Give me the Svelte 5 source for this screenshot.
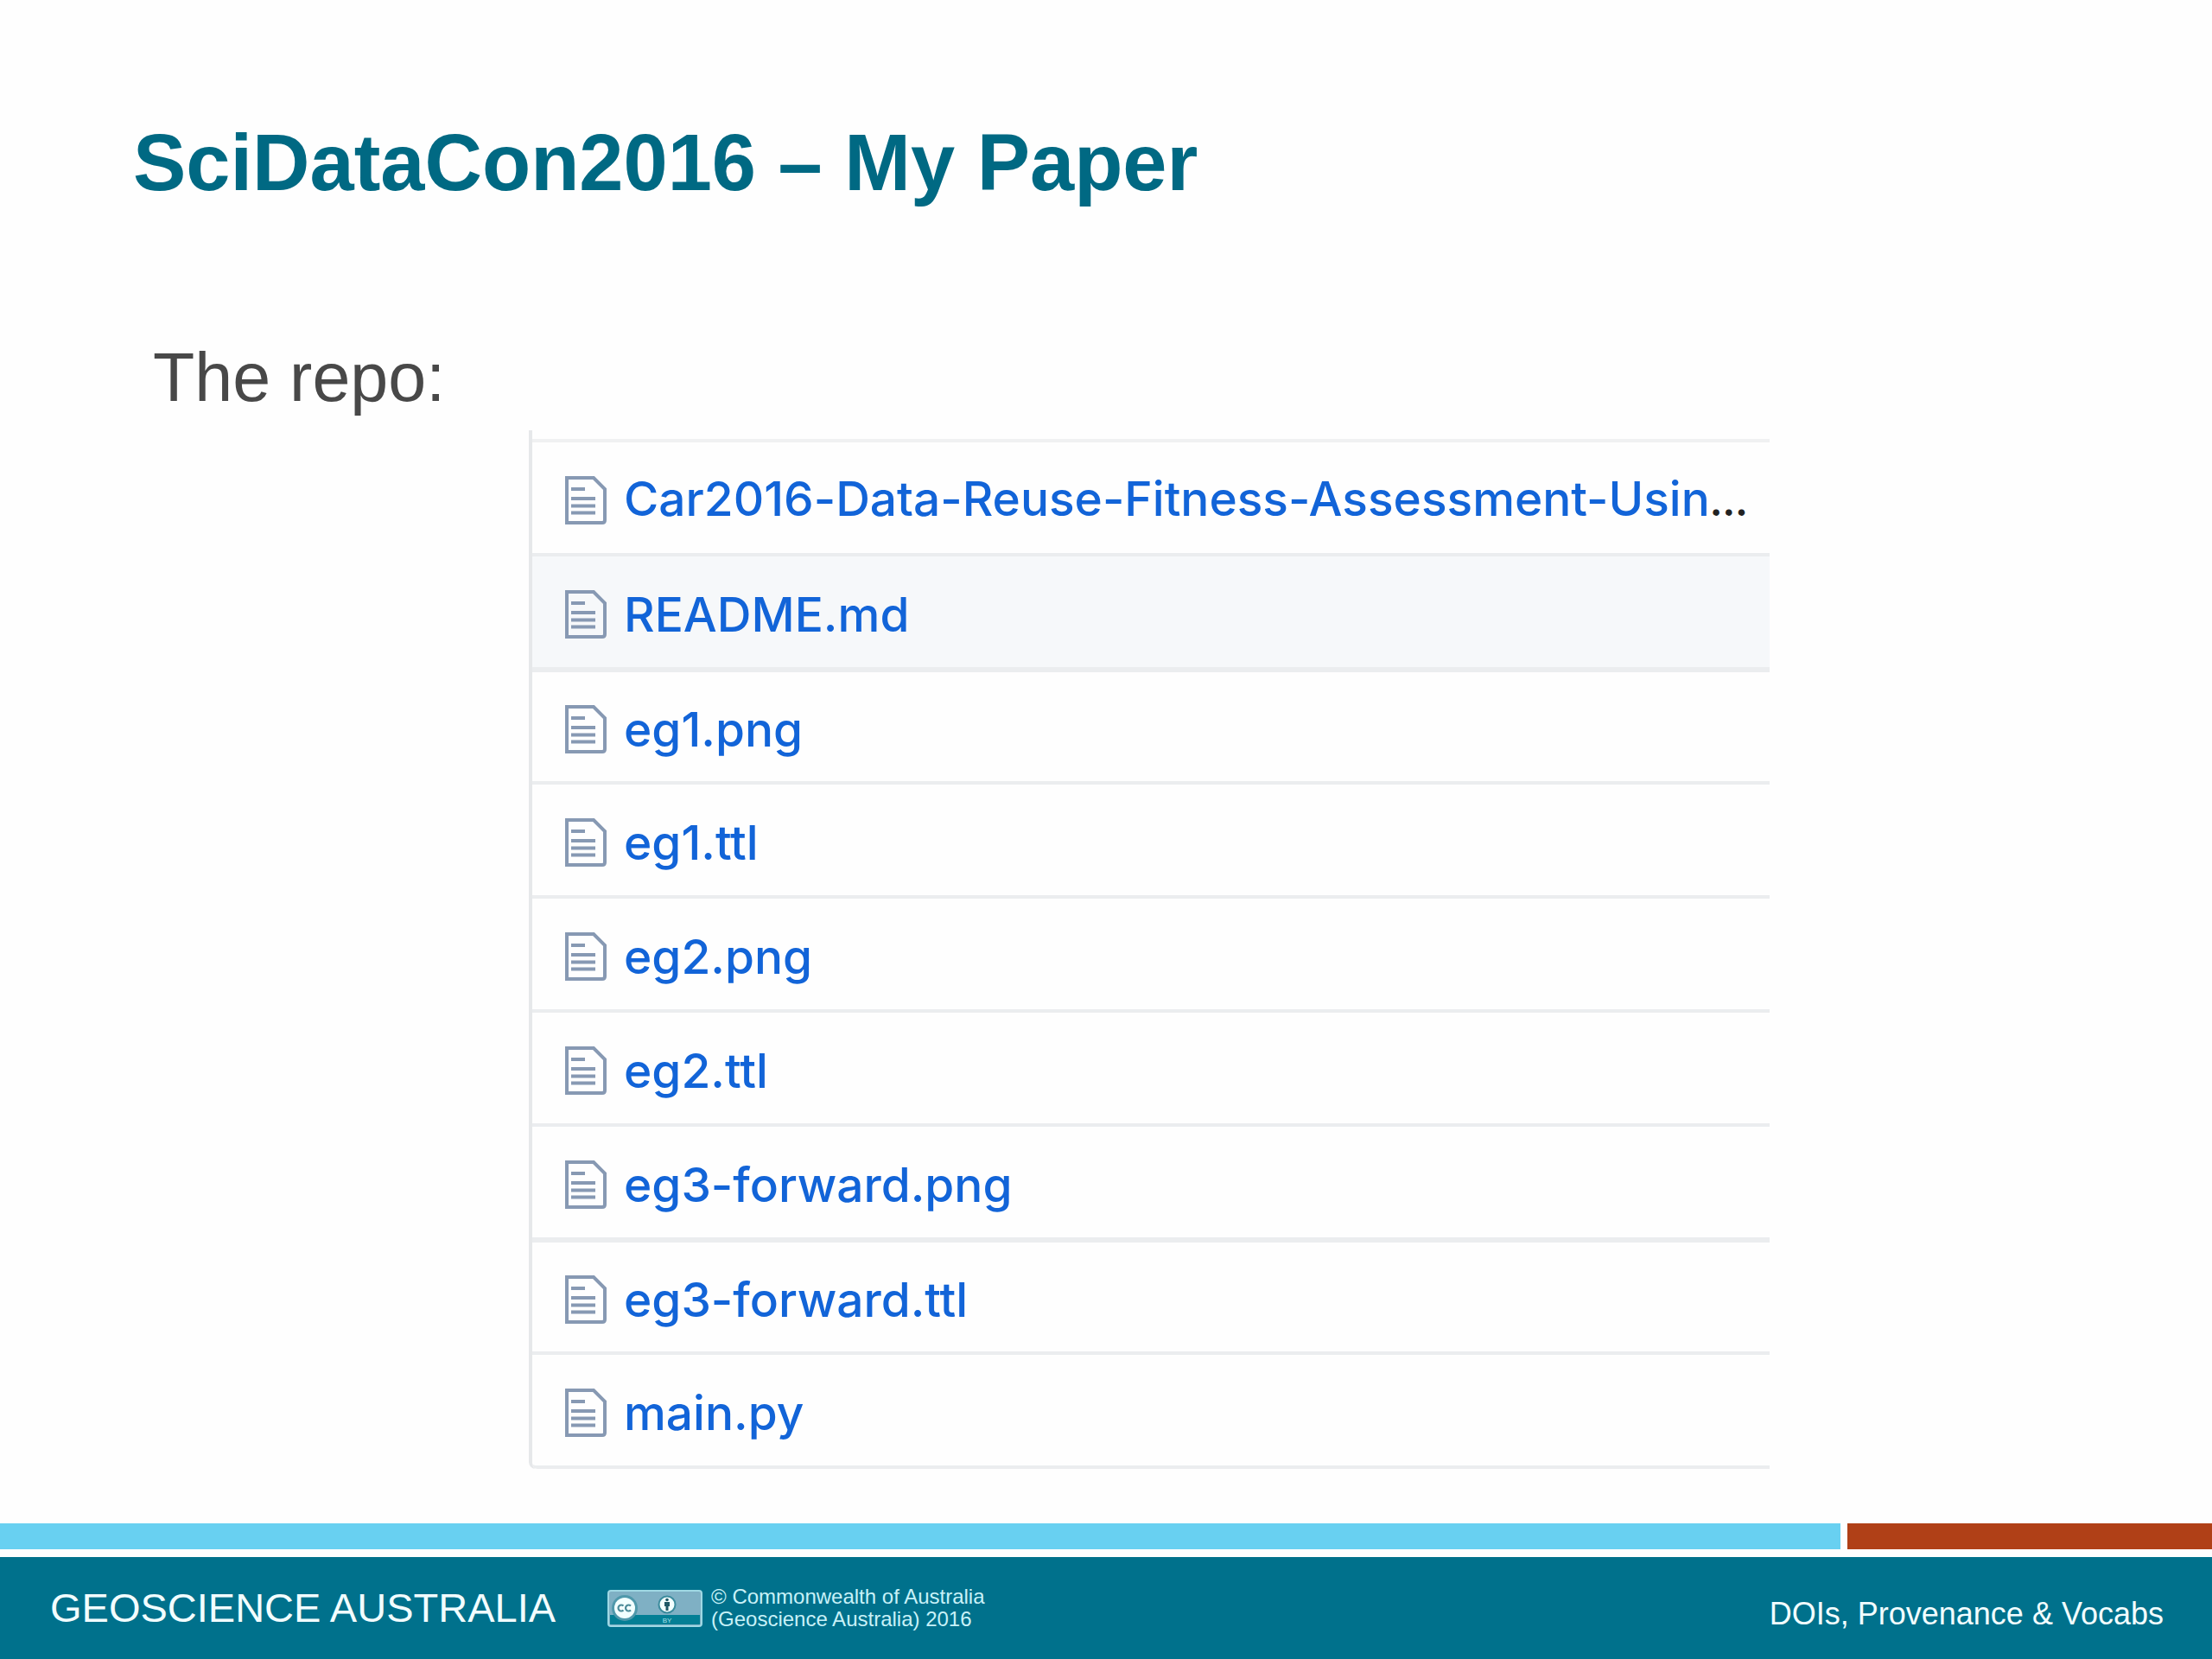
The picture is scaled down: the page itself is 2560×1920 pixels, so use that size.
<script>
	const files = [
		{ name: 'Car2016-Data-Reuse-Fitness-Assessment-Usin', truncated: true },
		{ name: 'README.md', active: true, heavy: true },
		{ name: 'eg1.png' },
		{ name: 'eg1.ttl' },
		{ name: 'eg2.png' },
		{ name: 'eg2.ttl' },
		{ name: 'eg3-forward.png', heavy: true },
		{ name: 'eg3-forward.ttl' },
		{ name: 'main.py' }
	];
</script>

<div class="slide">
	<main>
		<h1>SciDataCon2016 – My Paper</h1>
		<p class="lead">The repo:</p>

		<ul class="files">
			{#each files as file (file.name)}
				<li class:active={file.active} class:heavy={file.heavy}>
					<svg class="file-icon" viewBox="0 0 48 56" aria-hidden="true">
						<path d="M2 2H33L46 15V51Q46 54 43 54H2Z" />
						<path d="M7 15H23M7 26H35M7 34.500H35M7 42.500H35" />
					</svg>
					<span>
						<a href="#{file.name}">{file.name}</a>{#if file.truncated}<span class="more">…</span>{/if}
					</span>
				</li>
			{/each}
		</ul>
	</main>

	<footer>
		<div class="stripes">
			<div class="blue"></div>
			<div class="rust"></div>
		</div>
		<div class="band">
			<div class="brand">GEOSCIENCE AUSTRALIA</div>
			<!-- Creative Commons attribution badge -->
			<svg class="badge" viewBox="0 0 110 43" aria-hidden="true">
				<rect x="1" y="1" width="108" height="41" rx="3" fill="#7fb0c4" stroke="#9fd8e4" stroke-width="2" />
				<rect x="3" y="29" width="104" height="11" fill="#047f95" />
				<circle cx="20" cy="21" r="15" fill="#4f98ab" />
				<circle cx="20" cy="21" r="12" fill="#f2ffff" />
				<path d="M18.500 18.500a3.500 3.500 0 1 0 0 5M27 18.500a3.500 3.500 0 1 0 0 5" fill="none" stroke="#4b8a98" stroke-width="2.200" />
				<circle cx="69" cy="17" r="9.500" fill="#f2ffff" stroke="#3b8b9d" stroke-width="2" />
				<circle cx="69" cy="11.500" r="1.800" fill="#1f5866" />
				<path d="M66 14H72V19H70.500V24H67.500V19H66Z" fill="#1f5866" />
				<text x="69" y="38" text-anchor="middle" font-size="8" fill="#a8e2ea">BY</text>
			</svg>
			<p class="copyright">© Commonwealth of Australia<br />(Geoscience Australia) 2016</p>
			<div class="topic">DOIs, Provenance &amp; Vocabs</div>
		</div>
	</footer>
</div>

<style>
	:global(body) {
		background: #fefefe;
	}

	.slide {
		min-height: 100vh;
		display: flex;
		flex-direction: column;
		font-family: 'Liberation Sans', Arial, sans-serif;
	}

	main {
		padding-top: 136px;
	}

	h1 {
		margin: 0 154px;
		font-size: 92px;
		line-height: 104px;
		color: #006983;
	}

	.lead {
		margin: 151px 177px 15px;
		font-size: 79px;
		line-height: 92px;
		color: #484848;
	}

	.files {
		list-style: none;
		margin: 0 20% 0 612px;
		padding: 10px 0 0;
		border-left: 4px solid #e6e8ea;
		border-bottom-left-radius: 8px;
		font-family: Inter, sans-serif;
		font-size: 55px;
		line-height: 68px;
		font-weight: 500;
		font-variant-ligatures: none;
	}

	li {
		box-sizing: border-box;
		height: 132px;
		display: flex;
		align-items: center;
		gap: 20px;
		padding: 5px 0 0 38px;
		border-bottom: 4px solid #ebedef;
		color: #222;
		white-space: nowrap;
	}

	li:first-child {
		height: 136px;
		border-top: 4px solid #f0f1f2;
	}

	li:last-child {
		border-bottom-left-radius: 6px;
	}

	li.active {
		background: #f6f8fa;
	}

	li.heavy {
		height: 134px;
		border-bottom-width: 6px;
	}

	li.heavy + li {
		height: 130px;
	}

	a {
		color: #1264d8;
		text-decoration: none;
	}

	.more {
		font-size: 44px;
		font-weight: 700;
	}

	.file-icon {
		flex: none;
		width: 48px;
		height: 56px;
		fill: none;
		stroke: #8799b3;
		stroke-width: 4;
	}

	footer {
		margin-top: auto;
	}

	.stripes {
		display: flex;
		gap: 8px;
		height: 30px;
		margin-bottom: 9px;
	}

	.blue {
		flex: 1;
		background: #68d0f1;
	}

	.rust {
		width: 422px;
		background: #b04017;
	}

	.band {
		display: flex;
		align-items: center;
		height: 118px;
		padding: 0 56px 0 58px;
		background: #00718c;
		color: #f2fdff;
	}

	.brand {
		font-size: 47px;
		line-height: 56px;
	}

	.badge {
		flex: none;
		width: 110px;
		height: 43px;
		margin: 0 10px 0 60px;
	}

	.copyright {
		margin: 0;
		font-size: 24px;
		line-height: 26px;
		color: #c8f1f8;
	}

	.topic {
		align-self: flex-end;
		margin: 0 0 32px auto;
		font-size: 36px;
		line-height: 40px;
	}
</style>
